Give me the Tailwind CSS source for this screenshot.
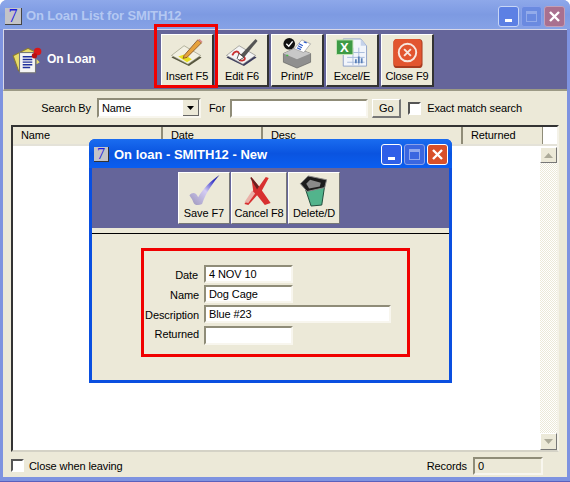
<!DOCTYPE html>
<html lang="en">
<head>
    <meta charset="UTF-8">
    <title>On Loan List for SMITH12</title>
    <script src="https://cdn.jsdelivr.net/npm/@tailwindcss/browser@4"></script>
</head>
<body class="bg-white">
    <div class="relative w-[570px] h-[482px] overflow-hidden font-['Liberation_Sans',sans-serif] text-[11px] tracking-[-0.1px] leading-[16px] text-black">
        <!-- Main window -->
        <div class="flex flex-col w-full h-full rounded-t-[7px] bg-[#7e93e0] pl-[3px] pr-[3px] pb-[4px] border-b-[1px] border-[#5a60bc]">
            <!-- Title bar -->
            <div class="flex items-center h-[29px] shrink-0 -mx-[3px] px-[4px] pt-[3px] rounded-t-[7px] bg-gradient-to-b from-[#8ea8ea] via-[#7d9ae2] to-[#86a2e6]">
                <div class="flex items-center justify-center w-[17px] h-[17px] ml-[1px] bg-[#c4c4c8] border-r border-b border-[#444] font-['Liberation_Serif',serif] text-[18px] leading-none text-[#1a1ae0]">7</div>
                <span class="ml-[4px] font-bold text-[13px] tracking-[-0.15px] text-[#b4c8f2]">On Loan List for SMITH12</span>
                <div class="ml-auto flex gap-[2px] mr-[1px]">
                    <div class="flex items-end justify-center w-[21px] h-[21px] pb-[4px] rounded-[3px] border border-[#c8d6f6] bg-[#5c80e4]"><div class="w-[7px] h-[3px] bg-white"></div></div>
                    <div class="flex items-center justify-center w-[21px] h-[21px] rounded-[3px] border border-[#8aa2ea] bg-[#6a8ae0]"><div class="w-[11px] h-[11px] border border-[#93abea] border-t-[3px]"></div></div>
                    <div class="flex items-center justify-center w-[21px] h-[21px] rounded-[3px] border border-[#c2a0b8] bg-[#a9708f]">
                        <svg class="w-[13px] h-[13px]" viewBox="0 0 13 13"><path d="M2 2l9 9M11 2l-9 9" stroke="#fff" stroke-width="2.4"/></svg>
                    </div>
                </div>
            </div>

            <!-- Toolbar -->
            <div class="flex items-start h-[62px] shrink-0 bg-[#65659a] border-t border-l border-[#d8d8e8] border-b-2 border-b-[#9c9a86] pt-[4px]">
                <div class="flex items-center w-[157px] pl-[7px] pt-[11px]">
                    <svg class="w-[33px] h-[30px]" viewBox="0 0 31 28">
                        <path d="M2 10l14-7 6 3-2 18-13 0z" fill="#e8dc6a" stroke="#8a7a30"/>
                        <rect x="8" y="7" width="15" height="19" fill="#f4f4f4" stroke="#777"/>
                        <path d="M11 11h9M11 13.500h9M11 16h9M11 18.500h9M11 21h7" stroke="#1f2f9c" stroke-width="1.300"/>
                        <circle cx="25" cy="6" r="3.500" fill="#d81818"/>
                        <circle cx="22" cy="10" r="2.500" fill="#b81010"/>
                        <path d="M24 13l3 3-3 2z" fill="#e8dc6a"/>
                    </svg>
                    <span class="ml-[3px] font-bold text-[12px] tracking-[0px] text-white -mt-[2px]">On Loan</span>
                </div>
                <div class="flex gap-[2px]">
                    <button class="flex flex-col items-center w-[53px] h-[53px] bg-[#ece9d8] border-t border-l border-white border-r-2 border-b-2 border-r-[#333] border-b-[#333] whitespace-nowrap">
                        <svg class="w-[34px] h-[33px] mt-[2px]" viewBox="0 0 34 34">
                            <path d="M1 21L14 11l18 10-13 9z" fill="#57563f"/>
                            <path d="M1 19L14 9l17 10-13 9z" fill="#f2f0e2" stroke="#8a8a70" stroke-width=".6"/>
                            <path d="M8 20l6-2 8 5-5 3z" fill="#e8e020"/>
                            <path d="M14 19L28 3l4 3-15 15-4 1z" fill="#e6a23c" stroke="#7a4a20" stroke-width=".8"/>
                            <path d="M28 3l2-1 3 3-1 1z" fill="#d88a8a"/>
                        </svg>
                        <span class="leading-[13px]">Insert F5</span>
                    </button>
                    <button class="flex flex-col items-center w-[53px] h-[53px] bg-[#ece9d8] border-t border-l border-white border-r-2 border-b-2 border-r-[#333] border-b-[#333] whitespace-nowrap">
                        <svg class="w-[34px] h-[33px] mt-[2px]" viewBox="0 0 34 34">
                            <path d="M1 21L14 11l18 10-13 9z" fill="#3c3c5c"/>
                            <path d="M1 19L14 9l17 10-13 9z" fill="#f4f4f4" stroke="#777" stroke-width=".6"/>
                            <path d="M7 19c2-5 6-5 7-2s6 2 6 5-5 3-6 1" fill="none" stroke="#c83030" stroke-width="1.800"/>
                            <path d="M15 19L31 2l2 2-14 17-5 2z" fill="#555"/>
                            <path d="M14 17l5 4-5 3-2-2z" fill="#fff" stroke="#333" stroke-width=".8"/>
                        </svg>
                        <span class="leading-[13px]">Edit F6</span>
                    </button>
                    <button class="flex flex-col items-center w-[53px] h-[53px] bg-[#ece9d8] border-t border-l border-white border-r-2 border-b-2 border-r-[#333] border-b-[#333] whitespace-nowrap">
                        <svg class="w-[34px] h-[33px] mt-[2px]" viewBox="0 0 34 34">
                            <path d="M3 17l13-6 15 6v9L17 32 3 26z" fill="#8f8f8f" stroke="#555" stroke-width=".6"/>
                            <path d="M3 17l14 6 14-6-15-6z" fill="#c8c8c8"/>
                            <path d="M14 12l8-9 9 4-7 9z" fill="#fff" stroke="#888" stroke-width=".6"/>
                            <path d="M19 7l4 2M18 9l4 2M17 11l4 2M24 5l3 1" stroke="#2a58c8" stroke-width="1.200"/>
                            <circle cx="9" cy="7" r="6" fill="#111"/>
                            <path d="M6 7l2.500 2.500L12.500 4.500" fill="none" stroke="#fff" stroke-width="1.500"/>
                            <path d="M6 19h2" stroke="#3ec03e" stroke-width="1.500"/>
                        </svg>
                        <span class="leading-[13px]">Print/P</span>
                    </button>
                    <button class="flex flex-col items-center w-[53px] h-[53px] bg-[#ece9d8] border-t border-l border-white border-r-2 border-b-2 border-r-[#333] border-b-[#333] whitespace-nowrap">
                        <div class="relative w-[34px] h-[33px] mt-[2px]">
                            <svg class="w-[34px] h-[33px]" viewBox="0 0 34 34">
                                <path d="M8 2h18l6 7v21H8z" fill="#f2f5fb" stroke="#8fa2c8"/>
                                <path d="M26 2v7h6z" fill="#c5d2ea"/>
                                <path d="M12 16h18M12 21h18M12 26h18M18 11v18M24 11v18" stroke="#a8bcdc" stroke-width="1"/>
                                <path d="M21 27v-4M24 27v-7M27 27v-5" stroke="#5a80b8" stroke-width="1.800"/>
                                <rect x="1" y="3" width="17" height="15" fill="#3d9a45" stroke="#c6e4b8"/>
                            </svg>
                            <span class="absolute left-[5px] top-[3px] font-bold text-[13px] leading-[15px] text-white">X</span>
                        </div>
                        <span class="leading-[13px]">Excel/E</span>
                    </button>
                    <button class="flex flex-col items-center w-[53px] h-[53px] bg-[#ece9d8] border-t border-l border-white border-r-2 border-b-2 border-r-[#333] border-b-[#333] whitespace-nowrap">
                        <svg class="w-[34px] h-[33px] mt-[2px]" viewBox="0 0 34 34">
                            <rect x="3" y="2" width="30" height="30" rx="4" fill="#a83c20"/>
                            <rect x="3" y="2" width="29" height="28" rx="4" fill="#e2552f"/>
                            <circle cx="17.500" cy="16" r="9" fill="none" stroke="#f8e8e0" stroke-width="2"/>
                            <path d="M14 12.500l7 7M21 12.500l-7 7" stroke="#f8e8e0" stroke-width="2"/>
                        </svg>
                        <span class="leading-[13px]">Close F9</span>
                    </button>
                </div>
            </div>

            <!-- Body -->
            <div class="flex flex-col flex-1 min-h-0 bg-[#ece9d8] px-[8px] pt-[7px]">
                <!-- Search row -->
                <div class="flex items-center h-[20px] shrink-0">
                    <span class="w-[80px] text-right">Search By</span>
                    <div class="flex items-center w-[104px] h-[20px] ml-[6px] bg-white border-2 border-t-[#8f8c78] border-l-[#8f8c78] border-r-[#f8f6ee] border-b-[#f8f6ee]">
                        <span class="pl-[3px] flex-1">Name</span>
                        <div class="flex items-center justify-center w-[16px] h-[16px] bg-[#ece9d8] border-r border-b border-[#666]">
                            <svg class="w-[7px] h-[4px]" viewBox="0 0 7 4"><path d="M0 0h7L3.500 4z" fill="#000"/></svg>
                        </div>
                    </div>
                    <span class="ml-[8px]">For</span>
                    <div class="w-[138px] h-[19px] ml-[5px] bg-white border-2 border-t-[#8f8c78] border-l-[#8f8c78] border-r-[#f8f6ee] border-b-[#f8f6ee]"></div>
                    <button class="flex items-center justify-center w-[29px] h-[19px] ml-[4px] mt-[1px] bg-[#ece9d8] border-t border-l border-white border-r-2 border-b-2 border-r-[#777] border-b-[#777]">Go</button>
                    <div class="w-[13px] h-[13px] ml-[7px] bg-white border-2 border-t-[#555] border-l-[#555] border-r-white border-b-white"></div>
                    <span class="ml-[6px]">Exact match search</span>
                </div>

                <!-- List -->
                <div class="flex flex-col flex-1 min-h-0 mt-[7px] ml-0 bg-white border-2 border-t-[#333] border-l-[#333] border-r-[#f4f2e8] border-b-[#d4d2c6]">
                    <div class="flex h-[17px] shrink-0 border-b-0">
                        <div class="w-[150px] pl-[8px] bg-[#ece9d8] border-r-2 border-[#8f8c78]">Name</div>
                        <div class="w-[100px] pl-[8px] bg-[#ece9d8] border-r-2 border-[#8f8c78]">Date</div>
                        <div class="w-[200px] pl-[8px] bg-[#ece9d8] border-r-2 border-[#8f8c78]">Desc</div>
                        <div class="w-[80px] pl-[8px] bg-[#ece9d8] border-r border-[#8f8c78]">Returned</div>
                    </div>
                    <div class="flex flex-1 min-h-0 border-t-2 border-[#e4e2d8]">
                        <div class="flex-1"></div>
                        <div class="flex flex-col w-[17px] pt-[1px] mr-0">
                            <div class="flex items-center justify-center w-[17px] h-[16px] bg-[#ece9d8] border-t border-l border-white border-r border-b border-r-[#777] border-b-[#777]">
                                <svg class="w-[9px] h-[5px]" viewBox="0 0 9 5"><path d="M4.500 0L9 5H0z" fill="#acaa99"/></svg>
                            </div>
                            <div class="flex-1 bg-[repeating-conic-gradient(#ece9d8_0_25%,#ffffff_0_50%)] bg-[length:2px_2px]"></div>
                            <div class="flex items-center justify-center w-[17px] h-[17px] bg-[#ece9d8] border-t border-l border-white border-r border-b border-r-[#777] border-b-[#777]">
                                <svg class="w-[9px] h-[5px]" viewBox="0 0 9 5"><path d="M0 0h9L4.500 5z" fill="#acaa99"/></svg>
                            </div>
                        </div>
                    </div>
                </div>

                <!-- Status row -->
                <div class="flex items-center h-[25px] shrink-0 pt-[2px]">
                    <div class="w-[13px] h-[13px] bg-white border-2 border-t-[#555] border-l-[#555] border-r-white border-b-white"></div>
                    <span class="ml-[5px]">Close when leaving</span>
                    <span class="ml-auto">Records</span>
                    <div class="w-[70px] h-[18px] ml-[6px] mr-[16px] pl-[3px] leading-[14px] border-2 border-t-[#8f8c78] border-l-[#8f8c78] border-r-[#f8f6ee] border-b-[#f8f6ee]">0</div>
                </div>
            </div>
        </div>

        <!-- Red annotation round Insert -->
        <div class="absolute left-[154px] top-[24px] w-[64px] h-[64px] border-[3px] border-[#f00000]"></div>

        <!-- Dialog window -->
        <div class="absolute left-[89px] top-[139px] flex flex-col w-[363px] h-[244px] rounded-t-[6px] bg-[#0a4fe0] px-[3px] pb-[3px]">
            <div class="flex items-center h-[29px] shrink-0 -mx-[3px] px-[4px] pt-[2px] rounded-t-[6px] bg-gradient-to-b from-[#1a6cf0] via-[#0a54e0] to-[#0a5ef0]">
                <div class="flex items-center justify-center w-[15px] h-[15px] ml-[1px] bg-[#c4c4c8] border-r border-b border-[#333] font-['Liberation_Serif',serif] text-[16px] leading-none text-[#1a1ae0]">7</div>
                <span class="ml-[5px] font-bold text-[13px] tracking-[0px] text-white">On loan - SMITH12 - New</span>
                <div class="ml-auto flex gap-[2px]">
                    <div class="flex items-end justify-center w-[21px] h-[21px] pb-[4px] rounded-[3px] border border-white bg-[#2f5fe8]"><div class="w-[7px] h-[3px] bg-white"></div></div>
                    <div class="flex items-center justify-center w-[21px] h-[21px] rounded-[3px] border border-[#8aa2ea] bg-[#3a66e0]"><div class="w-[11px] h-[11px] border border-[#8fa8ee] border-t-[3px]"></div></div>
                    <div class="flex items-center justify-center w-[21px] h-[21px] rounded-[3px] border border-white bg-[#d8502a]">
                        <svg class="w-[13px] h-[13px]" viewBox="0 0 13 13"><path d="M2 2l9 9M11 2l-9 9" stroke="#fff" stroke-width="2.400"/></svg>
                    </div>
                </div>
            </div>
            <div class="flex flex-col flex-1 min-h-0 bg-[#ece9d8]">
                <div class="flex items-start h-[60px] shrink-0 pt-[4px] pl-[86px] bg-[#65659a] gap-[1px]">
                    <button class="flex flex-col items-center w-[52px] h-[52px] bg-[#ece9d8] border-t border-l border-white border-r border-b border-r-[#777] border-b-[#777] whitespace-nowrap">
                        <svg class="w-[34px] h-[33px] mt-[1px]" viewBox="0 0 34 34">
                            <defs>
                                <linearGradient id="saveCheck" x1="0" y1="1" x2="1" y2="0">
                                    <stop offset="0" stop-color="#9a94b8"/>
                                    <stop offset=".5" stop-color="#d4ccf4"/>
                                    <stop offset=".8" stop-color="#3838c8"/>
                                    <stop offset="1" stop-color="#202080"/>
                                </linearGradient>
                            </defs>
                            <path d="M2 22c3-4 7-3 9 2 5-9 13-17 22-23-6 7-14 18-18 30-4 2-8 1-9-2-1-3-3-5-4-7z" fill="url(#saveCheck)"/>
                        </svg>
                        <span class="leading-[13px]">Save F7</span>
                    </button>
                    <button class="flex flex-col items-center w-[56px] h-[52px] bg-[#ece9d8] border-t border-l border-white border-r border-b border-r-[#777] border-b-[#777] whitespace-nowrap">
                        <svg class="w-[34px] h-[33px] mt-[1px]" viewBox="0 0 34 34">
                            <path d="M9 3l8 10 7-10 3 1-7 13 9 13-6 2-8-10-9 10-4-1 9-14z" fill="#d83030"/>
                            <path d="M13 20l-7 10-4-1 8-12z" fill="#eab0a8"/>
                            <path d="M9 3l8 10-2 3-7-12z" fill="#6a2020"/>
                        </svg>
                        <span class="leading-[13px]">Cancel F8</span>
                    </button>
                    <button class="flex flex-col items-center w-[52px] h-[52px] bg-[#ece9d8] border-t border-l border-white border-r border-b border-r-[#777] border-b-[#777] whitespace-nowrap">
                        <svg class="w-[34px] h-[33px] mt-[1px]" viewBox="0 0 34 34">
                            <path d="M8 15l20-3-3 20-11 1z" fill="#52b48c" stroke="#1e4a3a"/>
                            <path d="M3 10l8-8 19 4-2 8-18 4z" fill="#1c1c1c" stroke="#888"/>
                            <path d="M9 10l4-4 11 3-1 4-11 2z" fill="#8a8a8a"/>
                        </svg>
                        <span class="leading-[13px]">Delete/D</span>
                    </button>
                </div>
                <div class="h-[1px] mt-[5px] bg-black shrink-0"></div>

                <!-- Form -->
                <div class="grid grid-cols-[auto_auto] justify-start gap-y-[2px] items-start pl-[51px] pt-[31px]">
                    <span class="w-[58px] pr-[3px] text-right leading-[15px] mt-[3px]">Date</span>
                    <div class="w-[89px] h-[18px] pl-[3px] ml-[3px] leading-[14px] bg-white border-2 border-t-[#8f8c78] border-l-[#8f8c78] border-r-[#f8f6ee] border-b-[#f8f6ee]">4 NOV 10</div>
                    <span class="w-[58px] pr-[2px] text-right leading-[15px] mt-[3px]">Name</span>
                    <div class="w-[89px] h-[18px] pl-[3px] ml-[3px] leading-[14px] bg-white border-2 border-t-[#8f8c78] border-l-[#8f8c78] border-r-[#f8f6ee] border-b-[#f8f6ee]">Dog Cage</div>
                    <span class="w-[58px] pr-[2px] text-right leading-[15px] mt-[3px]">Description</span>
                    <div class="w-[187px] h-[18px] pl-[3px] ml-[3px] leading-[14px] bg-white border-2 border-t-[#8f8c78] border-l-[#8f8c78] border-r-[#f8f6ee] border-b-[#f8f6ee]">Blue #23</div>
                    <span class="w-[58px] pr-[2px] text-right leading-[15px] mt-[2px]">Returned</span>
                    <div class="w-[89px] h-[19px] ml-[3px] mt-[1px] bg-white border-2 border-t-[#8f8c78] border-l-[#8f8c78] border-r-[#f8f6ee] border-b-[#f8f6ee]"></div>
                </div>
            </div>
        </div>

        <!-- Red annotation round form -->
        <div class="absolute left-[141px] top-[248px] w-[269px] h-[109px] border-[3px] border-[#f00000]"></div>
    </div>
</body>
</html>
